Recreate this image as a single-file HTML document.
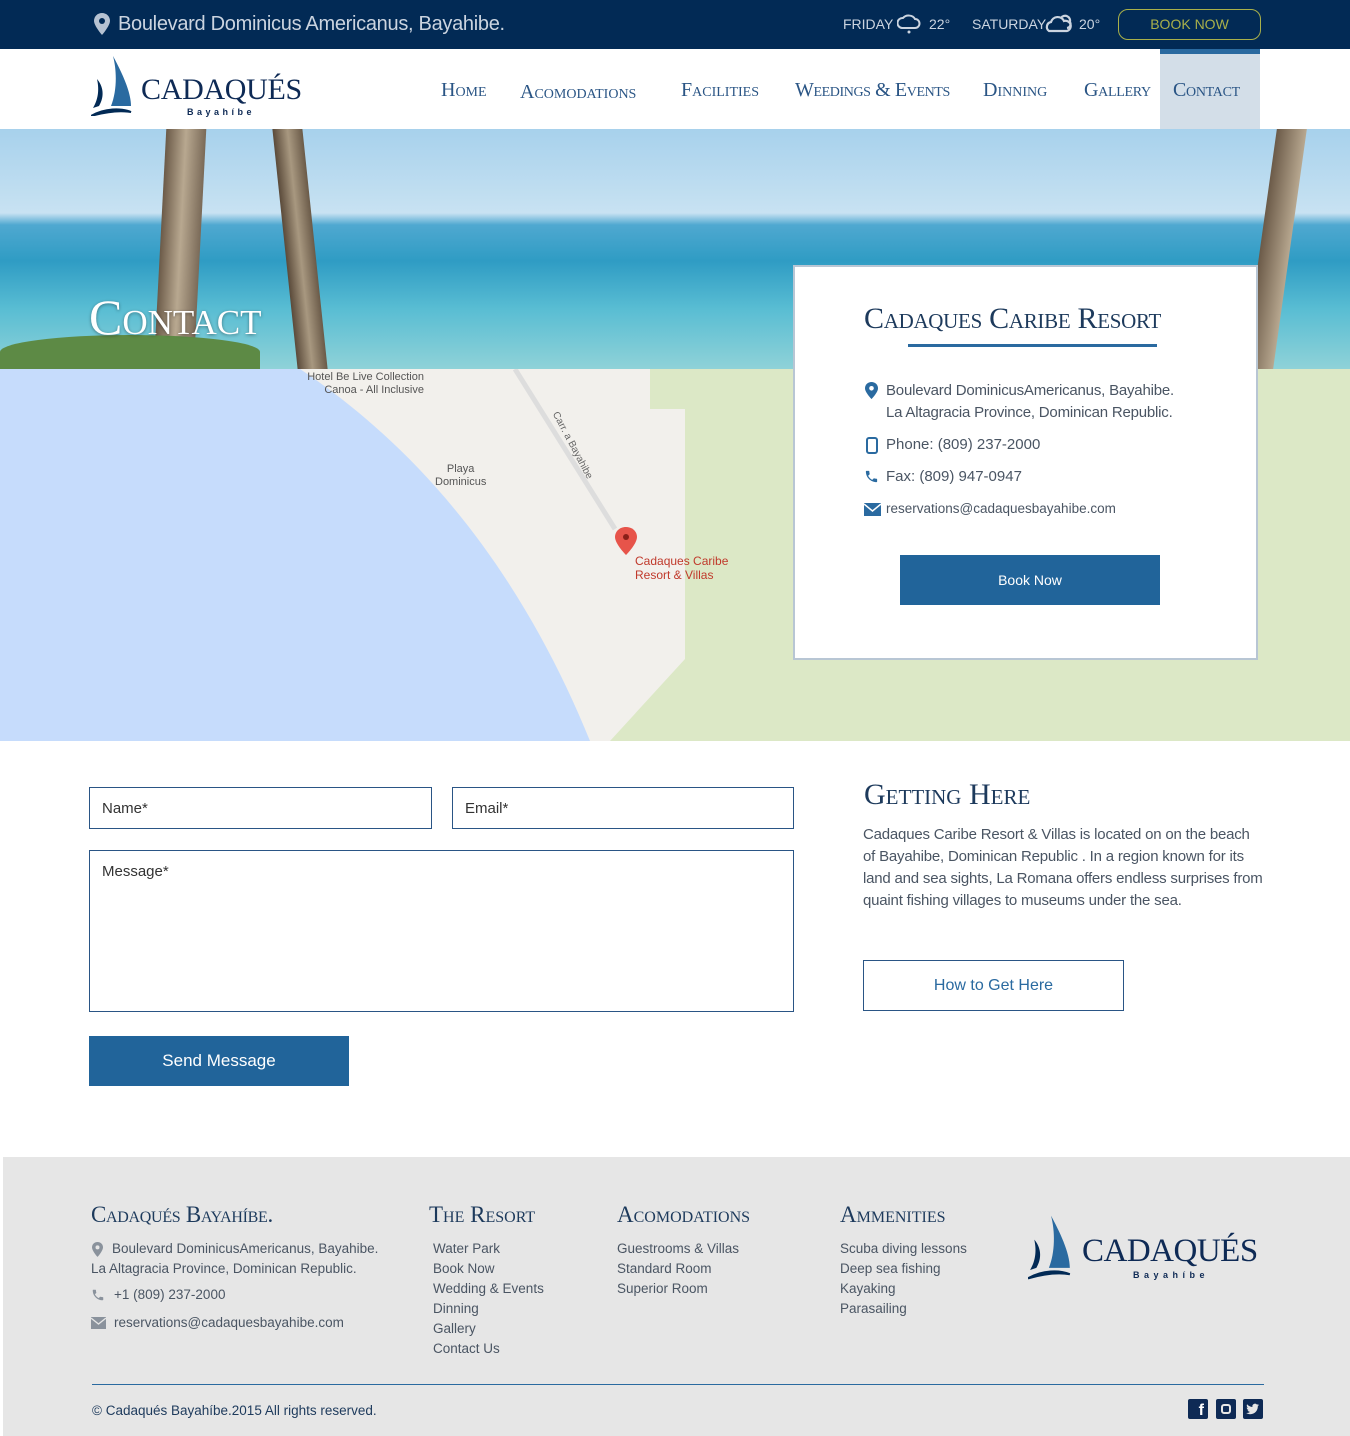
<!DOCTYPE html>
<html><head><meta charset="utf-8"><style>
*{margin:0;padding:0;box-sizing:border-box}
body{width:1350px;height:1436px;position:relative;background:#fff;font-family:"Liberation Sans",sans-serif;color:#4a5563;overflow:hidden}
.a{position:absolute}
.serif{font-family:"Liberation Serif",serif;font-variant:small-caps}
.top{left:0;top:0;width:1350px;height:49px;background:#022a55}
.nav a{position:absolute;top:79px;font-family:"Liberation Serif",serif;font-variant:small-caps;font-size:20px;color:#2a5585;white-space:nowrap}
.inp{border:1px solid #2a5585;font-size:15px;color:#333;padding:12px}
.ft h3{font-family:"Liberation Serif",serif;font-variant:small-caps;font-size:23px;color:#1d3a5c;font-weight:normal}
.ft p{font-size:13.5px;line-height:20px;color:#4a5563}
</style></head><body>
<div class="a top"></div>
<svg class="a" style="left:94px;top:13px" width="16" height="22" viewBox="0 0 16 22"><path d="M8 0C3.6 0 0 3.4 0 7.8 0 13 8 22 8 22s8-9 8-14.2C16 3.4 12.4 0 8 0z" fill="#b6c2d2"/><circle cx="8" cy="8" r="3" fill="#022a55"/></svg>
<div class="a" style="left:118px;top:13px;font-size:20px;color:#cbd4e0;letter-spacing:-0.3px">Boulevard Dominicus Americanus, Bayahibe.</div>
<div class="a" style="left:843px;top:16px;font-size:14px;color:#cbd4e0">FRIDAY</div>
<svg class="a" style="left:897px;top:13px" width="24" height="22"><path d="M5 15a5 5 0 0 1 1-10 7 6 0 0 1 12 1 4 4 0 0 1 0 9z" fill="none" stroke="#cbd4e0" stroke-width="2"/><circle cx="12" cy="19" r="1.5" fill="#cbd4e0"/></svg>
<div class="a" style="left:929px;top:16px;font-size:14px;color:#cbd4e0">22°</div>
<div class="a" style="left:972px;top:16px;font-size:14px;color:#cbd4e0">SATURDAY</div>
<svg class="a" style="left:1045px;top:12px" width="28" height="22"><path d="M4 19a5 5 0 0 1 2-9 7 7 0 0 1 13-1 5 5 0 0 1 3 10z M16 6a5 5 0 0 1 9 4 4 4 0 0 1-3 6" fill="none" stroke="#cbd4e0" stroke-width="2.2"/></svg>
<div class="a" style="left:1079px;top:16px;font-size:14px;color:#cbd4e0">20°</div>
<div class="a" style="left:1118px;top:9px;width:143px;height:31px;border:1px solid #a9b04a;border-radius:10px;color:#a9b04a;font-size:14px;text-align:center;line-height:29px">BOOK NOW</div>
<svg class="a" style="left:91px;top:56px" width="44" height="60" viewBox="0 0 44 60"><path d="M22 0 C30 15 40 35 40 50 L20 50 C26 35 26 15 22 0z" fill="#2a6aa0"/><path d="M6 23 C12 30 14 40 8 50 L2 52 C8 42 8 32 6 23z" fill="#022a55"/><path d="M0 60 C14 52 30 52 40 56 C28 54 14 56 0 60z" fill="#022a55" stroke="#022a55" stroke-width="2"/></svg>
<div class="a" style="left:141px;top:73px;font-family:'Liberation Serif',serif;font-size:30px;color:#0e2a55;letter-spacing:-0.3px">CADAQUÉS</div>
<div class="a" style="left:187px;top:107px;font-size:9px;font-weight:bold;color:#0e2a55;letter-spacing:3.5px">Bayahíbe</div>
<div class="a" style="left:1160px;top:49px;width:100px;height:80px;background:#d3dee8;border-top:5px solid #2a6aa0"></div>
<div class="nav"><a style="left:441px">Home</a><a style="left:520px;top:81px">Acomodations</a><a style="left:681px">Facilities</a><a style="left:795px;letter-spacing:-0.4px">Weedings &amp; Events</a><a style="left:983px">Dinning</a><a style="left:1084px;letter-spacing:-0.3px">Gallery</a><a style="left:1173px;letter-spacing:-0.3px">Contact</a></div>
<div class="a" style="left:0;top:129px;width:1350px;height:240px;background:linear-gradient(180deg,#a7d1ec 0%,#c8e2f2 35%,#4fa8d0 40%,#2f9cc4 55%,#59bdd3 75%,#8fd2d8 100%)"></div>
<div class="a" style="left:160px;top:129px;width:40px;height:240px;background:linear-gradient(90deg,#6b5a48,#b8a890,#7a6a58);transform:skewX(-3deg)"></div>
<div class="a" style="left:285px;top:129px;width:30px;height:240px;background:linear-gradient(90deg,#5a4a3a,#a89880,#6a5a48);transform:skewX(6deg)"></div>
<div class="a" style="left:0;top:335px;width:260px;height:34px;background:#5d8a45;border-radius:60% 60% 0 0"></div>
<div class="a" style="left:1260px;top:129px;width:30px;height:240px;background:linear-gradient(90deg,#6b5a48,#b8a890);transform:skewX(-8deg)"></div>
<div class="a serif" style="left:89px;top:288px;font-size:50px;color:#fff;text-shadow:0 1px 3px rgba(0,0,0,.4)">Contact</div>
<div class="a" style="left:0;top:369px;width:1350px;height:372px;background:#dce8c6"></div>
<svg class="a" style="left:0;top:369px" width="800" height="372"><polygon points="300,0 650,0 650,40 685,40 685,290 610,372 0,372 0,0" fill="#f2f0ec"/><path d="M0 0 L300 0 C420 80 520 200 590 372 L0 372z" fill="#c6dcfc"/><line x1="515" y1="0" x2="615" y2="160" stroke="#ddd" stroke-width="5"/><path d="M626 158c-7 0-11 5-11 10 0 7 11 18 11 18s11-11 11-18c0-5-4-10-11-10z" fill="#e7544a"/><circle cx="626" cy="168" r="3" fill="#8a1f18"/></svg>
<div class="a" style="left:306px;top:371px;font-size:11px;color:#555;line-height:13px;text-align:right;width:118px">Hotel Be Live Collection<br>Canoa - All Inclusive</div>
<div class="a" style="left:435px;top:463px;font-size:11px;color:#555;line-height:13px;text-align:center">Playa<br>Dominicus</div>
<div class="a" style="left:635px;top:554px;font-size:12px;color:#c0392b;line-height:14px">Cadaques Caribe<br>Resort &amp; Villas</div>
<div class="a" style="left:535px;top:440px;font-size:10px;color:#666;transform:rotate(62deg)">Carr. a Bayahibe</div>
<div class="a" style="left:793px;top:265px;width:465px;height:395px;background:#fff;border:2px solid #b8c6d4"></div>
<div class="a serif" style="left:864px;top:302px;font-size:30px;color:#1d3a5c;letter-spacing:-0.3px">Cadaques Caribe Resort</div>
<div class="a" style="left:908px;top:344px;width:249px;height:3px;background:#2a6aa0"></div>
<svg class="a" style="left:865px;top:382px" width="13" height="17"><path d="M6.5 0C3 0 0 2.6 0 6.2 0 10.5 6.5 17 6.5 17S13 10.5 13 6.2C13 2.6 10 0 6.5 0z" fill="#2a6aa0"/><circle cx="6.5" cy="6.3" r="2.3" fill="#fff"/></svg>
<div class="a" style="left:886px;top:380px;font-size:15px;line-height:22px;color:#4a5563;letter-spacing:-0.2px">Boulevard DominicusAmericanus, Bayahibe.<br>La Altagracia Province, Dominican Republic.</div>
<svg class="a" style="left:866px;top:437px" width="12" height="17"><rect x="1" y="1" width="10" height="15" rx="2" fill="none" stroke="#2a6aa0" stroke-width="2"/></svg>
<div class="a" style="left:886px;top:436px;font-size:15px;color:#4a5563">Phone: (809) 237-2000</div>
<svg class="a" style="left:864px;top:469px" width="15" height="15" viewBox="0 0 24 24"><path d="M6.6 10.8c1.4 2.8 3.8 5.1 6.6 6.6l2.2-2.2c.3-.3.7-.4 1-.2 1.1.4 2.3.6 3.6.6.6 0 1 .4 1 1V20c0 .6-.4 1-1 1C10.6 21 3 13.4 3 4c0-.6.4-1 1-1h3.5c.6 0 1 .4 1 1 0 1.3.2 2.5.6 3.6.1.3 0 .7-.2 1z" fill="#2a6aa0"/></svg>
<div class="a" style="left:886px;top:468px;font-size:15px;color:#4a5563">Fax: (809) 947-0947</div>
<svg class="a" style="left:864px;top:503px" width="17" height="13"><rect width="17" height="13" fill="#2a6aa0"/><path d="M0 1 L8.5 8 L17 1" fill="none" stroke="#fff" stroke-width="1.5"/></svg>
<div class="a" style="left:886px;top:501px;font-size:13.5px;color:#4a5563">reservations@cadaquesbayahibe.com</div>
<div class="a" style="left:900px;top:555px;width:260px;height:50px;background:#21649a;color:#fff;font-size:14px;text-align:center;line-height:50px">Book Now</div>
<div class="a inp" style="left:89px;top:787px;width:343px;height:42px">Name*</div>
<div class="a inp" style="left:452px;top:787px;width:342px;height:42px">Email*</div>
<div class="a inp" style="left:89px;top:850px;width:705px;height:162px">Message*</div>
<div class="a" style="left:89px;top:1036px;width:260px;height:50px;background:#21649a;color:#fff;font-size:17px;text-align:center;line-height:50px">Send Message</div>
<div class="a serif" style="left:864px;top:778px;font-size:30px;color:#1d3a5c">Getting Here</div>
<div class="a" style="left:863px;top:824px;width:400px;font-size:15px;line-height:22px;color:#4a5563;letter-spacing:-0.2px">Cadaques Caribe Resort &amp; Villas is located on on the beach of Bayahibe, Dominican Republic .  In a region known for its land and sea sights, La Romana offers endless surprises from quaint fishing villages to museums under the sea.</div>
<div class="a" style="left:863px;top:960px;width:261px;height:51px;border:1px solid #2a5585;color:#2a6aa0;font-size:16px;text-align:center;line-height:50px">How to Get Here</div>
<div class="a ft" style="left:3px;top:1157px;width:1347px;height:279px;background:#e6e6e6">
<h3 class="a" style="left:88px;top:45px;letter-spacing:-0.3px">Cadaqués Bayahíbe.</h3>
<svg class="a" style="left:89px;top:85px" width="11" height="15"><path d="M5.5 0C2.5 0 0 2.3 0 5.3 0 9 5.5 15 5.5 15S11 9 11 5.3C11 2.3 8.5 0 5.5 0z" fill="#8a929c"/><circle cx="5.5" cy="5.4" r="2" fill="#e6e6e6"/></svg>
<p class="a" style="left:88px;top:82px;text-indent:21px">Boulevard DominicusAmericanus, Bayahibe.<br>La Altagracia Province, Dominican Republic.</p>
<svg class="a" style="left:88px;top:131px" width="14" height="14" viewBox="0 0 24 24"><path d="M6.6 10.8c1.4 2.8 3.8 5.1 6.6 6.6l2.2-2.2c.3-.3.7-.4 1-.2 1.1.4 2.3.6 3.6.6.6 0 1 .4 1 1V20c0 .6-.4 1-1 1C10.6 21 3 13.4 3 4c0-.6.4-1 1-1h3.5c.6 0 1 .4 1 1 0 1.3.2 2.5.6 3.6.1.3 0 .7-.2 1z" fill="#8a929c"/></svg>
<p class="a" style="left:111px;top:128px">+1 (809) 237-2000</p>
<svg class="a" style="left:88px;top:160px" width="15" height="12"><rect width="15" height="12" fill="#8a929c"/><path d="M0 1 L7.5 7 L15 1" fill="none" stroke="#e6e6e6" stroke-width="1.3"/></svg>
<p class="a" style="left:111px;top:156px">reservations@cadaquesbayahibe.com</p>
<h3 class="a" style="left:426px;top:45px">The Resort</h3>
<p class="a" style="left:430px;top:82px">Water Park<br>Book Now<br>Wedding &amp; Events<br>Dinning<br>Gallery<br>Contact Us</p>
<h3 class="a" style="left:614px;top:45px">Acomodations</h3>
<p class="a" style="left:614px;top:82px">Guestrooms &amp; Villas<br>Standard Room<br>Superior Room</p>
<h3 class="a" style="left:837px;top:45px">Ammenities</h3>
<p class="a" style="left:837px;top:82px">Scuba diving lessons<br>Deep sea fishing<br>Kayaking<br>Parasailing</p>
<svg class="a" style="left:1025px;top:57px" width="46" height="66" viewBox="0 0 44 60"><path d="M22 0 C30 15 40 35 40 50 L20 50 C26 35 26 15 22 0z" fill="#2a6aa0"/><path d="M6 23 C12 30 14 40 8 50 L2 52 C8 42 8 32 6 23z" fill="#022a55"/><path d="M0 60 C14 52 30 52 40 56 C28 54 14 56 0 60z" fill="#022a55" stroke="#022a55" stroke-width="2"/></svg>
<div class="a" style="left:1079px;top:76px;font-family:'Liberation Serif',serif;font-size:33px;color:#0e2a55;letter-spacing:-0.5px">CADAQUÉS</div>
<div class="a" style="left:1130px;top:113px;font-size:9px;font-weight:bold;color:#0e2a55;letter-spacing:4.5px">Bayahíbe</div>
<div class="a" style="left:89px;top:227px;width:1172px;height:1px;background:#2a6aa0"></div>
<p class="a" style="left:89px;top:244px;color:#1d3a5c">© Cadaqués Bayahíbe.2015 All rights reserved.</p>
<div class="a" style="left:1185px;top:242px;width:20px;height:20px;background:#0e2a55;border-radius:2px;color:#fff;font-weight:bold;font-size:16px;text-align:right;padding-right:4px;line-height:24px">f</div>
<div class="a" style="left:1213px;top:242px;width:20px;height:20px;background:#0e2a55;border-radius:2px"><div style="margin:5px;width:10px;height:10px;border:2px solid #e6e6e6;border-radius:3px"></div></div>
<svg class="a" style="left:1240px;top:242px" width="20" height="20" viewBox="0 0 20 20"><rect width="20" height="20" rx="2" fill="#0e2a55"/><path d="M16 6c-.5.2-1 .4-1.5.4.5-.3 1-.8 1.2-1.4-.5.3-1.1.5-1.7.6a2.6 2.6 0 0 0-4.5 2.4C7.300 7.900 5.400 6.900 4.100 5.300c-.7 1.200-.3 2.700.8 3.500-.4 0-.8-.1-1.200-.3 0 1.300.9 2.400 2.100 2.600-.4.1-.8.1-1.200 0 .3 1.100 1.300 1.800 2.500 1.800A5.300 5.300 0 0 1 3.200 14c1.200.8 2.600 1.200 4 1.200 4.900 0 7.600-4.100 7.600-7.600V7.200c.5-.4 1-.8 1.200-1.200z" fill="#e6e6e6"/></svg>
</div>
</body></html>
